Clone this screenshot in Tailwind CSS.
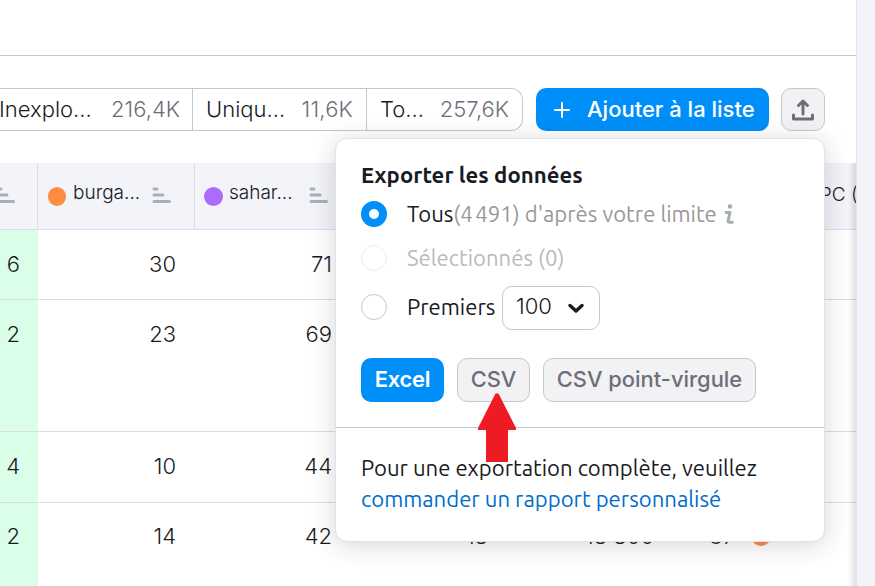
<!DOCTYPE html>
<html lang="fr">
<head>
    <meta charset="UTF-8">
    <meta name="viewport" content="width=device-width, initial-scale=1.0">
    <title>Exporter les données</title>
    <script src="https://cdn.jsdelivr.net/npm/@tailwindcss/browser@4"></script>
</head>
<body class="h-screen overflow-hidden bg-[#f3f4f9] font-['Inter',sans-serif] text-[#191b23]">
    <div class="relative w-[857px] h-[586px] overflow-hidden bg-white border-r border-[#e0e1e9] flex flex-col">
        <div class="h-14 shrink-0 border-b border-[#c4c7cf]"></div>

        <!-- filters and actions -->
        <div class="flex h-[43px] mt-8 shrink-0 text-[22px] whitespace-nowrap">
            <div class="flex w-[523px] shrink-0 border border-l-0 border-[#c4c7cf] rounded-r-xl leading-[41px] font-light">
                <div class="flex justify-between w-[193px] pr-[12px] border-r border-[#c4c7cf]">
                    <span class="-ml-px">Inexplo...</span><span class="text-[#6c6e79]">216,4K</span>
                </div>
                <div class="flex justify-between w-[174px] px-[13px] border-r border-[#c4c7cf]">
                    <span>Uniqu...</span><span class="text-[#6c6e79] tracking-[0.2px]">11,6K</span>
                </div>
                <div class="flex justify-between flex-1 px-[13px]">
                    <span>To...</span><span class="text-[#6c6e79]">257,6K</span>
                </div>
            </div>
            <button class="flex items-center w-[233px] ml-[13px] pl-[18px] rounded-[10px] bg-[#008ff8] text-white font-medium">
                <svg class="w-4 h-4 mr-[17px]" viewBox="0 0 16 16" fill="none" stroke="currentColor" stroke-width="2" stroke-linecap="round"><path d="M8 1v14M1 8h14"/></svg>
                <span>Ajouter à la liste</span>
            </button>
            <button class="flex items-center justify-center w-11 ml-3 rounded-[10px] border border-[#c4c7cf] bg-[#f2f2f5] text-[#6c6e79]">
                <svg class="w-6 h-6" viewBox="0 0 24 24" fill="none" stroke="currentColor" stroke-width="3" stroke-linecap="round" stroke-linejoin="round"><path d="M12 16V3M7.500 7.500L12 3l4.500 4.500M2.500 17v4h19v-4"/></svg>
            </button>
        </div>

        <!-- table header -->
        <div class="flex h-[67px] mt-8 shrink-0 bg-[#f3f4f9] border-b border-[#dcdde4] text-[19px] leading-[60px] font-light whitespace-nowrap">
            <div class="w-[38px] shrink-0 border-r border-[#dcdde4]">
                <svg class="-ml-1 mt-6 w-5 h-4" viewBox="0 0 20 16" stroke="#abadb9" stroke-width="3" stroke-linecap="round"><path d="M2 2h3M2 8h9M2 14.500h15.500"/></svg>
            </div>
            <div class="flex w-[157px] shrink-0 pl-[10px] border-r border-[#dcdde4]">
                <span class="w-[18px] h-[19px] mt-6 rounded-full bg-[#ff8c43]"></span>
                <span class="w-[79px] ml-[7px]">burga...</span>
                <svg class="w-5 h-4 mt-6" viewBox="0 0 20 16" stroke="#abadb9" stroke-width="3" stroke-linecap="round"><path d="M2 2h3M2 8h9M2 14.500h15.500"/></svg>
            </div>
            <div class="flex w-[157px] shrink-0 pl-[9px]">
                <span class="w-[19px] h-[19px] mt-6 rounded-full bg-[#ab6cfe]"></span>
                <span class="w-[80px] ml-[6px]">sahar...</span>
                <svg class="w-5 h-4 mt-6" viewBox="0 0 20 16" stroke="#abadb9" stroke-width="3" stroke-linecap="round"><path d="M2 2h3M2 8h9M2 14.500h15.500"/></svg>
            </div>
            <div class="pl-[454px] leading-[63px]">CPC (</div>
        </div>

        <!-- rows -->
        <div class="shrink-0 text-[22px] leading-[68px] font-light text-right">
            <div class="flex h-[70px] border-b border-[#dcdde4]">
                <div class="w-[38px] pr-[18px] bg-[#dafee8]">6</div>
                <div class="w-[157px] pr-[19px]">30</div>
                <div class="w-[157px] pr-[20px]">71</div>
            </div>
            <div class="flex h-[132px] border-b border-[#dcdde4]">
                <div class="w-[38px] pr-[18px] bg-[#dafee8]">2</div>
                <div class="w-[157px] pr-[19px]">23</div>
                <div class="w-[157px] pr-[20px]">69</div>
            </div>
            <div class="flex h-[71px] border-b border-[#dcdde4]">
                <div class="w-[38px] pr-[18px] bg-[#dafee8]">4</div>
                <div class="w-[157px] pr-[19px]">10</div>
                <div class="w-[157px] pr-[20px]">44</div>
            </div>
            <div class="flex h-[90px] leading-[67px]">
                <div class="w-[38px] pr-[18px] bg-[#dafee8]">2</div>
                <div class="w-[157px] pr-[19px]">14</div>
                <div class="w-[157px] pr-[20px]">42</div>
                <div class="w-[155px] pr-[19px]">18</div>
                <div class="w-[166px] pr-[19px]">18 800</div>
                <div class="w-[62px]">37</div>
                <div class="w-5 h-5 mt-[23px] ml-4 rounded-full bg-[#ff8c43]"></div>
            </div>
        </div>

        <!-- scroll shadow on the right edge of the table -->
        <div class="absolute right-0 top-[163px] bottom-0 w-2 bg-linear-to-l from-black/12 to-transparent"></div>

        <!-- export popup -->
        <div class="absolute left-[335px] top-[138px] w-[490px] h-[404px] rounded-xl border border-[#e0e1e9] bg-white shadow-[0_3px_24px_rgba(25,27,35,0.18)] font-['Ubuntu','Noto_Sans',sans-serif] text-[22.1px] whitespace-nowrap">
            <div class="h-[289px] px-[25px] pt-[22px] border-b border-[#c4c7cf]">
                <h2 class="h-7 leading-7 font-bold tracking-[0.05px]">Exporter les données</h2>
                <label class="flex items-center h-[50px]">
                    <span class="w-[26px] h-[26px] mr-5 rounded-full border-8 border-[#008ff8]"></span>
                    <span>Tous</span><span class="text-[#989898]">(4&#8239;491) d'après votre limite</span>
                    <svg class="w-[11px] h-5 ml-[7px]" viewBox="0 0 11 20" fill="none" stroke="#a5afb3" stroke-width="3"><circle cx="6" cy="2.500" r="2.300" fill="#a5afb3" stroke="none"/><path d="M1 8.500h5l-2 8.500q0 1.200 1.500 1.200h4" stroke-linejoin="round"/></svg>
                </label>
                <label class="flex items-center h-[38px] text-[#bababa]">
                    <span class="w-[26px] h-[26px] mr-5 rounded-full border border-[#ececef]"></span>
                    <span>Sélectionnés (0)</span>
                </label>
                <div class="flex items-center h-[60px]">
                    <span class="w-[26px] h-[26px] mr-5 rounded-full border border-[#c4c7cf]"></span>
                    <span class="w-[95px]">Premiers</span>
                    <div class="flex items-center w-[98px] h-11 mt-0.5 pl-[13px] rounded-[10px] border border-[#c4c7cf]">
                        <span class="w-[51px] pb-0.5 font-['Inter',sans-serif] font-light">100</span>
                        <svg class="w-[18px] h-3" viewBox="0 0 18 12" fill="none" stroke="currentColor" stroke-width="3.500" stroke-linecap="round" stroke-linejoin="round"><path d="M3 3.500l6 5.500 6-5.500"/></svg>
                    </div>
                </div>
                <div class="flex gap-[13px] mt-[21px] font-['Inter',sans-serif] text-[21.900px] leading-[40px] font-medium text-[#6c6e79]">
                    <button class="w-[83px] h-11 pb-0.5 rounded-[10px] bg-[#008ff8] text-white font-semibold tracking-[-0.2px]">Excel</button>
                    <button class="w-[73px] h-11 pb-0.5 rounded-[10px] border border-[#c4c7cf] bg-[#f2f2f5]">CSV</button>
                    <button class="w-[213px] h-11 pb-0.5 rounded-[10px] border border-[#c4c7cf] bg-[#f2f2f5]">CSV point-virgule</button>
                </div>
            </div>
            <div class="px-[25px] pt-6 leading-[31px]">
                <p>Pour une exportation complète, veuillez</p>
                <a href="#" class="text-[#006dca]">commander un rapport personnalisé</a>
            </div>
        </div>

        <!-- red arrow pointing at the CSV button -->
        <svg class="absolute left-[477px] top-[392px] w-10 h-[70px]" viewBox="0 0 40 70" fill="#ed1c24"><path d="M18.500 1.500h3L39 36v2H31v32H9V38H1v-2z"/></svg>
    </div>
</body>
</html>
